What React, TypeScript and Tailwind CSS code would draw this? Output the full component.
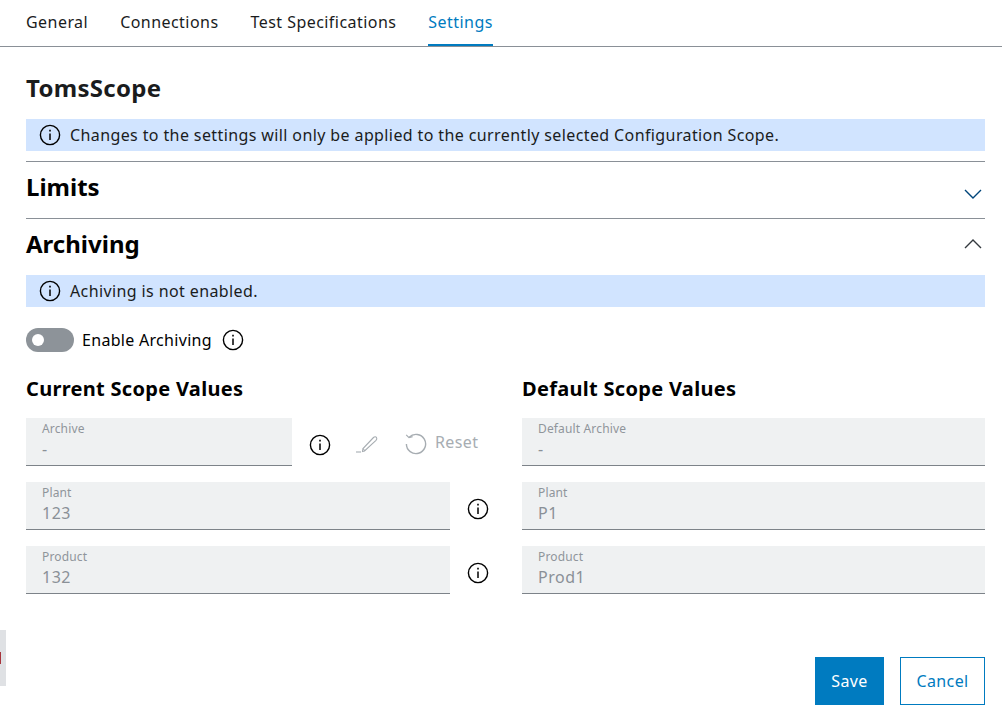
import React from "react";

const font = { fontFamily: '"Noto Sans", sans-serif' };

function InfoIcon({ className = "" }: { className?: string }) {
  return (
    <svg viewBox="0 0 22 22" className={"h-[22px] w-[22px] shrink-0 text-black " + className} fill="none" stroke="currentColor">
      <circle cx="11" cy="11" r="9.6" strokeWidth="1.4" />
      <path d="M11 9.5V16" strokeWidth="1.5" />
      <path d="M11 5.8V7.4" strokeWidth="1.6" />
    </svg>
  );
}

function Banner({ text }: { text: string }) {
  return (
    <div className="flex h-8 items-center gap-[9px] bg-[#d1e4ff] pl-[13px] text-[16px] text-[#1a1c1d] tracking-[0.39px]">
      <InfoIcon />
      <span>{text}</span>
    </div>
  );
}

function Field({ label, value, className = "" }: { label: string; value: string; className?: string }) {
  return (
    <div className={"flex h-12 flex-col border-b border-[#7d8389] bg-[#eff1f2] px-4 pt-[3px] " + className}>
      <span className="text-[12px] leading-[16px] tracking-[0.15px] text-[#8f959b]">{label}</span>
      <span className="text-[16px] leading-[24px] tracking-[0.5px] text-[#8a9097]">{value}</span>
    </div>
  );
}

export default function App() {
  return (
    <div className="relative h-[716px] w-[1002px] overflow-hidden bg-white" style={font}>
      <div className="flex h-[47px] gap-8 border-b border-[#8a9097] pl-[26px] text-[16px] text-[#1a1c1d] tracking-[0.45px]">
        <div className="flex h-[46px] items-center pb-[2px]">General</div>
        <div className="flex h-[46px] items-center pb-[2px]">Connections</div>
        <div className="flex h-[46px] items-center pb-[2px]">Test Specifications</div>
        <div className="flex h-[46px] items-center border-b-2 border-[#007bc0] text-[#007bc0]">Settings</div>
      </div>

      <div className="flex flex-col px-[26px] pr-[17px]">
        <h1 className="mt-[24px] h-[34px] text-[24px] font-bold leading-[33px] tracking-[0.3px] text-[#1a1c1d]">TomsScope</h1>
        <div className="mt-[14px]">
          <Banner text="Changes to the settings will only be applied to the currently selected Configuration Scope." />
        </div>

        <div className="mt-[10px] flex h-[57px] items-center justify-between border-t border-[#8a9097] pr-[3px] pt-px">
          <h2 className="mb-[7px] text-[24px] font-bold text-black">Limits</h2>
          <svg viewBox="0 0 18 10" className="mt-[7px] h-[10px] w-[18px] text-[#00457a]" fill="none" stroke="currentColor" strokeWidth="1.4">
            <path d="M1 1l8 8 8-8" />
          </svg>
        </div>
        <div className="flex h-[57px] items-center justify-between border-t border-[#8a9097] pr-[3px] pt-px">
          <h2 className="mb-[7px] text-[24px] font-bold text-black">Archiving</h2>
          <svg viewBox="0 0 18 10" className="mb-[7px] h-[10px] w-[18px] text-[#33393e]" fill="none" stroke="currentColor" strokeWidth="1.4">
            <path d="M1 9l8-8 8 8" />
          </svg>
        </div>
        <Banner text="Achiving is not enabled." />

        <div className="mt-[21px] flex h-6 items-center text-[16px] text-black tracking-[0.3px]">
          <div className="flex h-6 w-12 items-center rounded-full bg-[#8d9399] pl-[6px]">
            <div className="h-3 w-3 rounded-full bg-white" />
          </div>
          <span className="ml-[8px]">Enable Archiving</span>
          <InfoIcon className="ml-[10px]" />
        </div>

        <div className="mt-[23px] flex gap-[30px]">
          <div className="flex w-[466px] flex-col">
            <h3 className="h-[30px] text-[20px] font-bold leading-[27px] tracking-[0.3px] text-black">Current Scope Values</h3>
            <div className="mt-[13px] flex h-12 items-center">
              <Field label="Archive" value="-" className="w-[266px]" />
              <InfoIcon className="ml-[17px] mt-[6px]" />
              <svg viewBox="0 0 24 24" className="ml-[24px] mt-[2px] h-6 w-6 text-[#a7adb2]" fill="none" stroke="currentColor" strokeWidth="1.1">
                <path d="M1 21h5" />
                <path d="M9.5 20l-2 .5.5-3L18.5 6.5c1-1 2.4-1 3 0s.3 2-.5 2.8z" />
                <path d="M8 17.5l2 2.5" />
              </svg>
              <svg viewBox="0 0 22 22" className="ml-[26px] mt-[4px] h-[22px] w-[22px] text-[#a7adb2]" fill="none" stroke="currentColor" strokeWidth="1.4">
                <path d="M4.2 4.2A9.6 9.6 0 1 1 1.4 11" />
                <path d="M1.2 1.8L4 4.6l3.6-.9" strokeWidth="1.2" />
              </svg>
              <span className="ml-[8px] text-[16px] text-[#a7adb2] tracking-[0.4px]">Reset</span>
            </div>
            <div className="mt-4 flex items-center">
              <Field label="Plant" value="123" className="w-[424px]" />
              <InfoIcon className="ml-[17px] mt-[6px]" />
            </div>
            <div className="mt-4 flex items-center">
              <Field label="Product" value="132" className="w-[424px]" />
              <InfoIcon className="ml-[17px] mt-[6px]" />
            </div>
          </div>
          <div className="flex w-[463px] flex-col">
            <h3 className="h-[30px] text-[20px] font-bold leading-[27px] tracking-[0.3px] text-black">Default Scope Values</h3>
            <Field label="Default Archive" value="-" className="mt-[13px]" />
            <Field label="Plant" value="P1" className="mt-4" />
            <Field label="Product" value="Prod1" className="mt-4" />
          </div>
        </div>

        <div className="mt-[63px] flex justify-end gap-4 text-[16px] tracking-[0.4px]">
          <button className="h-12 w-[69px] bg-[#007bc0] text-white">Save</button>
          <button className="h-12 w-[85px] border border-[#007bc0] text-[#007bc0]">Cancel</button>
        </div>
      </div>

      <div className="absolute left-0 top-[630px] flex h-14 w-[6px] items-center bg-[#dfe1e4]">
        <div className="h-[12px] w-px bg-[#a8343c]" />
      </div>
    </div>
  );
}
